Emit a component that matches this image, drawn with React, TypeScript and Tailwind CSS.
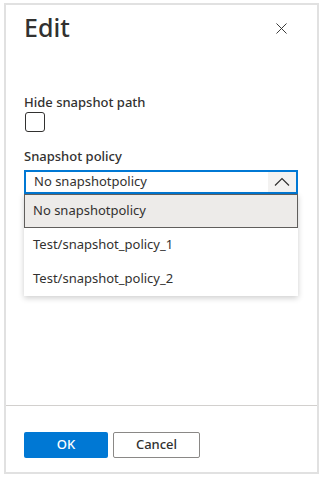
import { X } from 'lucide-react';

const options = ['No snapshotpolicy', 'Test/snapshot_policy_1', 'Test/snapshot_policy_2'];

export default function App() {
  return (
    <div className="w-[324px] h-[477px] bg-white pt-[3px] pl-[4px] font-['Noto_Sans',sans-serif] text-[#323130]">
      <div className="w-[315px] h-[471px] border-2 border-[#e1e1e1] flex flex-col">
        <div className="flex-1 px-[18px]">
          <div className="flex items-center justify-between pt-[4px]">
            <h1 className="text-[25px] leading-[36px] font-medium">Edit</h1>
            <X size={19} strokeWidth={1.2} className="mr-[8px] mt-[2px]" />
          </div>

          <div className="mt-[48px] text-[13px] leading-[18px] font-medium">Hide snapshot path</div>
          <div className="mt-[1px] ml-[1px] w-[20px] h-[20px] border border-[#323130] rounded-[3px]" />

          <div className="mt-[15px] text-[13px] leading-[18px] font-medium">Snapshot policy</div>
          <div className="relative mt-[5px] w-[274px]">
            <div className="h-[24px] border-2 border-[#0078d4] flex items-center justify-between">
              <span className="pl-[8px] text-[13px]">No snapshotpolicy</span>
              <span className="h-full w-[28px] bg-[#f3f2f1] flex items-center justify-center">
                <svg width="16" height="10" viewBox="0 0 16 10" fill="none" stroke="#323130" strokeWidth="1.2">
                  <path d="M1 8.5 L8 1.5 L15 8.5" />
                </svg>
              </span>
            </div>
            <div className="absolute left-0 right-0 top-[24px] bg-white shadow-[0_2px_6px_rgba(0,0,0,0.2)]">
              {options.map((o, i) => (
                <div
                  key={o}
                  className={
                    i === 0
                      ? 'h-[34px] flex items-center pl-[8px] text-[13px] bg-[#edebe9] border border-[#605e5c]'
                      : 'h-[34px] flex items-center pl-[9px] text-[13px]'
                  }
                >
                  {o}
                </div>
              ))}
            </div>
          </div>
        </div>

        <div className="border-t border-[#d2d0ce] h-[67px] px-[18px] flex items-start pt-[26px] gap-[5px]">
          <button className="w-[84px] h-[26px] rounded-[2px] bg-[#0078d4] text-white text-[13px] font-medium">OK</button>
          <button className="w-[87px] h-[26px] rounded-[2px] border border-[#8a8886] bg-white text-[13px] font-medium">Cancel</button>
        </div>
      </div>
    </div>
  );
}
